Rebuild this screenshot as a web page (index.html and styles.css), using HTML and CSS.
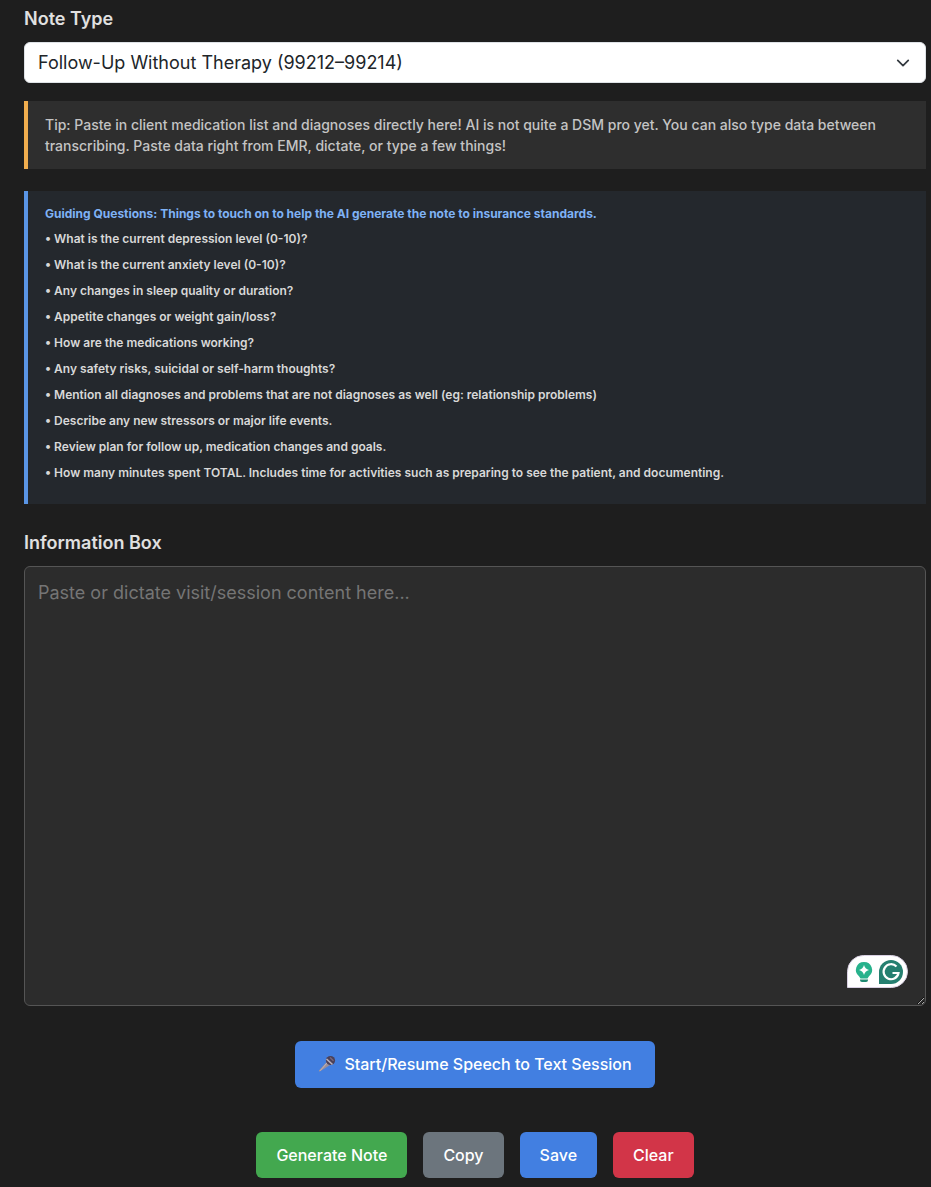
FILE: index.html
```
<!DOCTYPE html>
<html lang="en">
<head>
    <meta charset="UTF-8">
    <meta name="viewport" content="width=device-width, initial-scale=1.0">
    <title>Note Generator</title>
    <link rel="stylesheet" href="styles.css">
</head>
<body>
    <div class="container">
        <label class="form-label" for="noteType">Note Type</label>
        <select class="form-select" id="noteType">
            <option value="followup">Follow-Up Without Therapy (99212–99214)</option>
        </select>

        <div class="tip">
            Tip: Paste in client medication list and diagnoses directly here! AI is not quite a DSM pro yet. You can also type data between transcribing. Paste data right from EMR, dictate, or type a few things!
        </div>

        <div class="guide">
            <div class="guide-title">Guiding Questions: Things to touch on to help the AI generate the note to insurance standards.</div>
            <ul class="guide-list">
                <li>What is the current depression level (0-10)?</li>
                <li>What is the current anxiety level (0-10)?</li>
                <li>Any changes in sleep quality or duration?</li>
                <li>Appetite changes or weight gain/loss?</li>
                <li>How are the medications working?</li>
                <li>Any safety risks, suicidal or self-harm thoughts?</li>
                <li>Mention all diagnoses and problems that are not diagnoses as well (eg: relationship problems)</li>
                <li>Describe any new stressors or major life events.</li>
                <li>Review plan for follow up, medication changes and goals.</li>
                <li>How many minutes spent TOTAL. Includes time for activities such as preparing to see the patient, and documenting.</li>
            </ul>
        </div>

        <label class="form-label" for="infoBox">Information Box</label>
        <div class="info-wrap">
            <textarea class="info-box" id="infoBox" placeholder="Paste or dictate visit/session content here..."></textarea>
            <div class="writing-badge">
                <svg width="61" height="33" viewBox="0 0 61 33">
                    <path d="M.5 32.5V16.500A16 16 0 0 1 16.500.5H44.500a16 16 0 0 1 0 32z" fill="#fff" stroke="#d9d0e3"/>
                    <path d="M17 7a8 8 0 0 0-5 14.300l1.500 2.200h7l1.500-2.200A8 8 0 0 0 17 7z" fill="#27b28c"/>
                    <path d="M13 24.500h8v.5a2 2 0 0 1-2 2h-4a2 2 0 0 1-2-2z" fill="#1f8a72"/>
                    <path d="M17 10q1 4 5 5-4 1-5 5-1-4-5-5 4-1 5-5z" fill="#fff"/>
                    <path d="M32 29V17a12 12 0 1 1 12 12z" fill="#257f70"/>
                    <path d="M49.500 11.500A7.500 7.500 0 1 0 51.500 18H45.500" fill="none" stroke="#fff" stroke-width="2.200"/>
                </svg>
            </div>
        </div>

        <div class="speech-row">
            <button type="button" class="btn btn-blue btn-speech">
                <svg width="18" height="18" viewBox="0 0 18 18">
                    <path d="M9 6.500L1 15.500q-.6 1.200.8 1L12 10z" fill="#9b8f98"/>
                    <path d="M9.500 7.500L2 15.800" stroke="#c3b5b8" stroke-width="1" fill="none"/>
                    <circle cx="12.500" cy="5.500" r="4.600" fill="#4b4058"/>
                    <path d="M8.500 4l6 5.500" stroke="#b9b2bd" stroke-width="1.600"/>
                    <path d="M12 2.500l3.500 3.200" stroke="#78697f" stroke-width="1.200"/>
                </svg>
                Start/Resume Speech to Text Session
            </button>
        </div>

        <div class="actions">
            <button type="button" class="btn btn-green">Generate Note</button>
            <button type="button" class="btn btn-gray">Copy</button>
            <button type="button" class="btn btn-blue">Save</button>
            <button type="button" class="btn btn-red">Clear</button>
        </div>
    </div>
</body>
</html>
```
FILE: styles.css
```
*{
    box-sizing: border-box;
}
body{
    margin: 0;
    background-color: #1e1e1e;
    color: #e0e0e0;
    font-family: Inter, "Liberation Sans", sans-serif;
    font-size: 18px;
}
.container{
    padding: 5px 5px 9px 24px;
}
.form-label{
    display: block;
    margin-bottom: 10px;
    line-height: 27px;
    font-weight: 600;
}
.form-select{
    display: block;
    width: 100%;
    height: 41px;
    padding: 0 13px;
    border: 1px solid #dee2e6;
    border-radius: 6px;
    appearance: none;
    background: #fff url("data:image/svg+xml,%3Csvg xmlns='http://www.w3.org/2000/svg' viewBox='0 0 16 16'%3E%3Cpath fill='none' stroke='%23343a40' stroke-linecap='round' stroke-linejoin='round' stroke-width='2' d='m2 5 6 6 6-6'/%3E%3C/svg%3E") no-repeat right 15px center / 14px 14px;
    color: #212529;
    font-family: inherit;
    font-size: 18px;
}
.tip{
    margin-top: 18px;
    padding: 13px 17px;
    border-left: 4px solid #f0ad4e;
    background-color: #2e2e2e;
    color: #c4c4c4;
    font-size: 14px;
    font-weight: 500;
    line-height: 21px;
}
.guide{
    margin: 22px 0 25px;
    padding: 13px 17px 15px;
    border-left: 4px solid #5a95e5;
    background-color: #24282d;
    color: #d8d8d8;
    font-size: 12px;
    font-weight: 600;
    line-height: 20px;
}
.guide-title{
    margin-bottom: 5px;
    color: #7fb2f5;
    font-weight: 700;
}
.guide-list{
    margin: 0;
    padding: 0;
    list-style: none;
}
.guide-list li{
    margin-bottom: 6px;
}
.guide-list li::before{
    content: "• ";
}
.info-wrap{
    position: relative;
}
.info-box{
    display: block;
    width: 100%;
    height: 440px;
    padding: 12px 13px;
    border: 1px solid #555;
    border-radius: 6px;
    background-color: #2c2c2c;
    color: #e0e0e0;
    font-family: inherit;
    font-size: 18px;
    line-height: 27px;
    resize: vertical;
}
.info-box::placeholder{
    color: #757575;
}
.writing-badge{
    position: absolute;
    right: 18px;
    bottom: 18px;
    height: 33px;
}
.speech-row{
    display: flex;
    justify-content: center;
    margin: 35px 0 44px;
}
.actions{
    display: flex;
    justify-content: center;
    gap: 16px;
}
.btn{
    padding: 10px 20px;
    border: none;
    border-radius: 6px;
    color: #fff;
    font-family: inherit;
    font-size: 16px;
    font-weight: 500;
    line-height: 26px;
    cursor: pointer;
}
.btn-speech{
    display: flex;
    align-items: center;
    gap: 8px;
    padding: 10px 23px 11px;
}
.btn-blue{
    background-color: #427fe1;
}
.btn-green{
    background-color: #43a84f;
}
.btn-gray{
    background-color: #6c757d;
}
.btn-red{
    background-color: #d23548;
}
```
